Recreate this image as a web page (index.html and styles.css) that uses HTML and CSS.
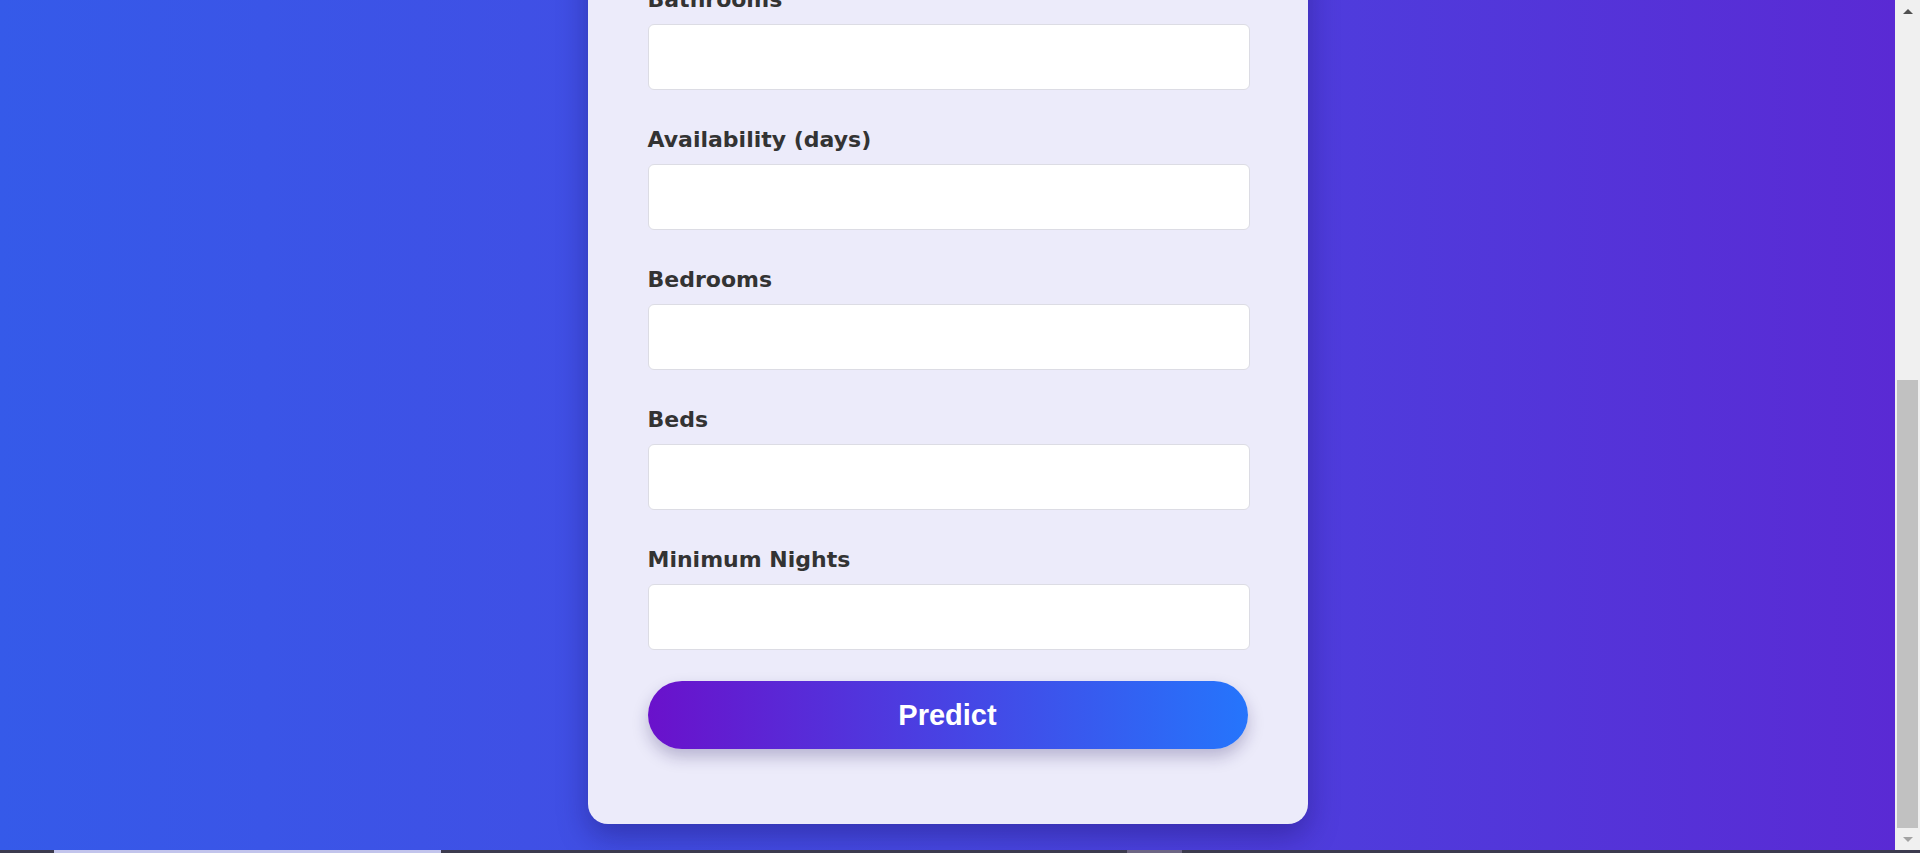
FILE: index.html
```html
<!DOCTYPE html>
<html lang="en">
<head>
<meta charset="utf-8">
<title>Airbnb Price Prediction</title>
<link rel="stylesheet" href="styles.css">
</head>
<body>
<div class="screen">
  <div class="main">
    <div class="viewport">
      <div class="card">
        <form class="form">
          <div class="field">
            <label class="label" for="bath">Bathrooms</label>
            <input class="input" id="bath" type="number">
          </div>
          <div class="field">
            <label class="label" for="avail">Availability (days)</label>
            <input class="input" id="avail" type="number">
          </div>
          <div class="field">
            <label class="label" for="bedr">Bedrooms</label>
            <input class="input" id="bedr" type="number">
          </div>
          <div class="field">
            <label class="label" for="beds">Beds</label>
            <input class="input" id="beds" type="number">
          </div>
          <div class="field">
            <label class="label" for="minn">Minimum Nights</label>
            <input class="input" id="minn" type="number">
          </div>
          <button class="btn" type="button">Predict</button>
        </form>
      </div>
    </div>
    <div class="scrollbar">
      <div class="sb-btn"><span class="arrow-up"></span></div>
      <div class="sb-track"><div class="sb-thumb"></div></div>
      <div class="sb-btn"><span class="arrow-down"></span></div>
    </div>
  </div>
  <div class="taskbar">
    <span class="tb-seg tb-seg1"></span>
    <span class="tb-seg tb-seg2"></span>
  </div>
</div>
</body>
</html>
```
FILE: styles.css
```css
* { box-sizing: border-box; }
html, body { margin: 0; padding: 0; }
body {
  width: 1920px;
  height: 853px;
  overflow: hidden;
  font-family: "DejaVu Sans", "Noto Sans", sans-serif;
}
.screen {
  display: flex;
  flex-direction: column;
  height: 853px;
}
.main {
  display: flex;
  height: 850px;
}
.viewport {
  flex: 1;
  overflow: hidden;
  display: flex;
  flex-direction: column;
  align-items: center;
  justify-content: flex-end;
  padding-bottom: 26px;
  background: linear-gradient(90deg, #355ae9 0%, #4748e2 50%, #5a2ad4 100%);
}
.card {
  width: 720px;
  flex-shrink: 0;
  background: #ecebfa;
  border-radius: 20px;
  padding: 40px 60px 75px 60px;
  box-shadow: 0 12px 30px rgba(20, 10, 80, 0.35);
}
.form {
  display: flex;
  flex-direction: column;
}
.field + .field { margin-top: 34px; }
.label {
  display: block;
  font-size: 22px;
  line-height: 30px;
  font-weight: 700;
  color: #333333;
  padding-top: 1px;
  margin-bottom: 9px;
}
.input {
  display: block;
  width: 602px;
  height: 66px;
  background: #ffffff;
  border: 1px solid #dcdce4;
  border-radius: 6px;
  margin: 0;
}
.btn {
  margin-top: 31px;
  width: 600px;
  height: 68px;
  border: none;
  border-radius: 34px;
  background: linear-gradient(90deg, #6a11cb 0%, #2575fc 100%);
  color: #ffffff;
  font-family: "Liberation Sans", Arial, sans-serif;
  font-weight: 700;
  font-size: 29px;
  box-shadow: 0 8px 16px rgba(30, 20, 90, 0.25);
}
.scrollbar {
  width: 25px;
  display: flex;
  flex-direction: column;
  background: #f0f0f0;
}
.sb-btn {
  height: 22px;
  display: flex;
  align-items: center;
  justify-content: center;
}
.arrow-up {
  width: 0; height: 0;
  border-left: 5px solid transparent;
  border-right: 5px solid transparent;
  border-bottom: 5px solid #505050;
}
.arrow-down {
  width: 0; height: 0;
  border-left: 5px solid transparent;
  border-right: 5px solid transparent;
  border-top: 5px solid #a3a3a3;
}
.sb-track {
  flex: 1;
  display: flex;
  flex-direction: column;
  justify-content: flex-end;
  padding: 0 2px;
}
.sb-thumb {
  height: 448px;
  background: #c1c1c1;
}
.taskbar {
  height: 3px;
  display: flex;
  background: #3c3b4f;
}
.tb-seg { display: block; height: 3px; }
.tb-seg1 { margin-left: 54px; width: 387px; background: #c2c4ec; }
.tb-seg2 { margin-left: 686px; width: 55px; background: #6d6684; }
```
